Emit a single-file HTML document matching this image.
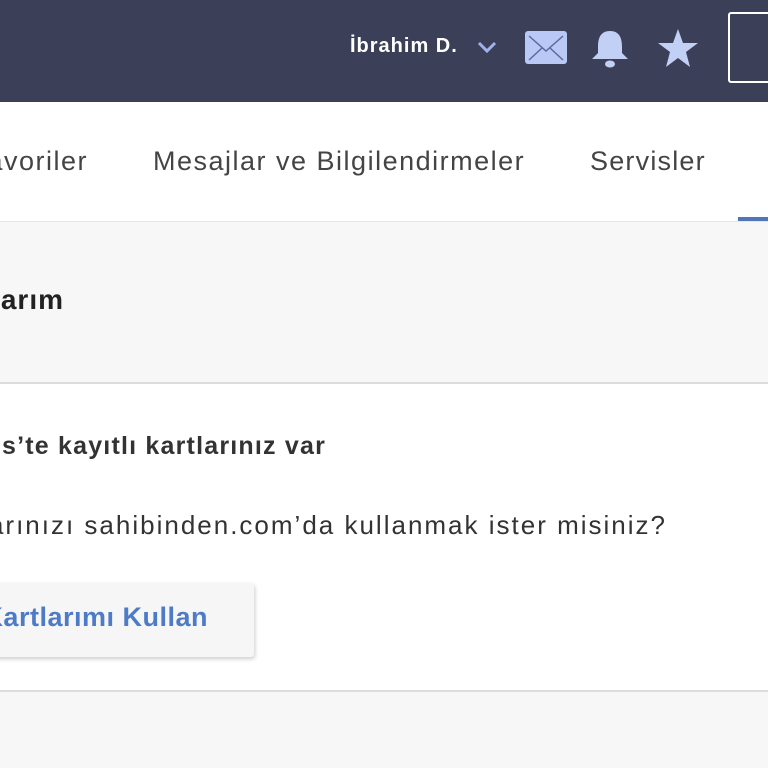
<html><head><style>
body{margin:0;width:768px;height:768px;overflow:hidden;background:#f7f7f7;font-family:"Liberation Sans",sans-serif;position:relative}
.a{position:absolute;white-space:nowrap}
</style></head><body>
<div class="a" style="left:0;top:0;width:768px;height:102px;background:#3c3f58"></div>
<div class="a" style="left:350px;top:35px;color:#fff;font-weight:bold;font-size:20px;letter-spacing:1px">İbrahim D.</div>
<svg class="a" style="left:476px;top:39px" width="22" height="16"><path d="M3 4 L11 12 L19 4" stroke="#9fb3ea" stroke-width="3" fill="none"/></svg>
<div class="a" style="left:525px;top:31px;width:42px;height:33px;background:#b9c8f5;border-radius:3px"></div>
<svg class="a" style="left:525px;top:31px" width="42" height="33"><path d="M4 5 L21 20 L38 5 M4 29 L17 17 M38 29 L25 17" stroke="#5a6aa0" stroke-width="1.5" fill="none"/></svg>
<svg class="a" style="left:590px;top:29px" width="40" height="42"><path d="M20 2 C10 2 8 10 8 18 L8 24 L2 30 L38 30 L32 24 L32 18 C32 10 30 2 20 2Z" fill="#c3d0f5"/><ellipse cx="20" cy="35" rx="5" ry="3.5" fill="#c3d0f5"/></svg>
<svg class="a" style="left:656px;top:27px" width="44" height="42"><path d="M22 2 L27 16 L42 16 L30 25 L34 40 L22 31 L10 40 L14 25 L2 16 L17 16Z" fill="#c3d0f5"/></svg>
<div class="a" style="left:728px;top:12px;width:60px;height:71px;border:2px solid #fff;border-radius:3px;box-sizing:border-box"></div>
<div class="a" style="left:0;top:102px;width:768px;height:119px;background:#fff;border-bottom:1px solid #e6e6e6"></div>
<div class="a" style="right:680px;top:146px;font-size:27px;color:#444;letter-spacing:1.5px">Favoriler</div>
<div class="a" style="left:153px;top:146px;font-size:27px;color:#444;letter-spacing:1.5px">Mesajlar ve Bilgilendirmeler</div>
<div class="a" style="left:590px;top:146px;font-size:27px;color:#444;letter-spacing:1.2px">Servisler</div>
<div class="a" style="left:738px;top:217px;width:40px;height:4px;background:#4f76b8"></div>
<div class="a" style="right:704px;top:284px;font-size:28px;color:#222;font-weight:bold;letter-spacing:1px">Kartlarım</div>
<div class="a" style="left:0;top:382px;width:768px;height:306px;background:#fff;border-top:2px solid #ddd;border-bottom:2px solid #ddd"></div>
<div class="a" style="right:442px;top:432px;font-size:25px;color:#333;font-weight:bold;letter-spacing:1.2px">Kartlarınız ss’te kayıtlı kartlarınız var</div>
<div class="a" style="right:101px;top:510px;font-size:26px;color:#333;letter-spacing:2px">Kartlarınızı sahibinden.com’da kullanmak ister misiniz?</div>
<div class="a" style="left:-10px;top:583px;width:264px;height:74px;background:#f6f6f6;border-radius:3px;box-shadow:1px 2px 4px rgba(0,0,0,.2)"></div>
<div class="a" style="right:560px;top:602px;font-size:27px;color:#4d7bc8;font-weight:bold;letter-spacing:0.5px">Kartlarımı Kullan</div>
</body></html>
